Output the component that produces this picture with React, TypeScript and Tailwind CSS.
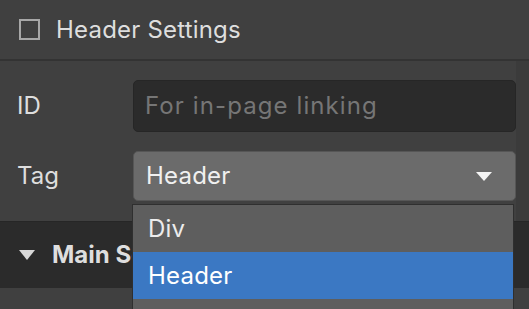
import React from "react";

const font = { fontFamily: "Inter, 'Noto Sans', sans-serif" };

export default function App() {
  return (
    <div className="relative h-[309px] w-[529px] overflow-hidden bg-[#404040] text-[#e0e0e0]" style={font}>
      <HeaderRow />
      <div className="h-[2px] bg-[#333333]" />
      <Fields />
      <MainSection />
      <TagMenu />
    </div>
  );
}

function HeaderRow() {
  return (
    <div className="flex h-[59px] items-center gap-[16px] pl-[19px]">
      <span className="h-[21px] w-[21px] border-2 border-[#a8a8a8]" />
      <span className="text-[24px] tracking-[0.2px] text-[#dedede]">Header Settings</span>
    </div>
  );
}

function Fields() {
  return (
    <div className="flex">
      <div className="flex flex-1 flex-col gap-[19px] pb-[20px] pt-[19px]">
        <div className="flex items-center">
          <span className="w-[133px] pl-[17px] text-[24px] text-[#dedede]">ID</span>
          <div className="flex h-[52px] flex-1 items-center rounded-[5px] border border-[#262626] bg-[#2b2b2b] pl-[11px] text-[24px] tracking-[1.1px] text-[#767676]">
            For in-page linking
          </div>
        </div>
        <div className="flex items-center">
          <span className="w-[133px] pl-[17px] text-[24px] text-[#dedede]">Tag</span>
          <div className="flex h-[50px] flex-1 items-center justify-between rounded-[5px] border border-[#565656] bg-[#6b6b6b] pl-[12px] pr-[23px] text-[24px] tracking-[0.2px] text-[#f0f0f0]">
            Header
            <svg viewBox="0 0 16 9" className="h-[9px] w-[16px]">
              <path d="M0 0h16L8 9Z" fill="#f5f5f5" />
            </svg>
          </div>
        </div>
      </div>
      <div className="w-[13px] bg-[#3b3b3b]" />
    </div>
  );
}

function MainSection() {
  return (
    <>
      <div className="flex h-[67px] items-center gap-[17px] border-t border-[#262626] bg-[#2b2b2b] pl-[19px]">
        <svg viewBox="0 0 16 10" className="h-[10px] w-[16px]">
          <path d="M0 0h16L8 10Z" fill="#d8d8d8" />
        </svg>
        <span className="text-[24px] font-bold text-[#dedede]">Main Settings</span>
      </div>
      <div className="h-[20px] bg-[#404040]" />
    </>
  );
}

function TagMenu() {
  return (
    <div className="absolute left-[132px] top-[204px] w-[382px] border border-[#2f2f2f] bg-[#5e5e5e] text-[24px] tracking-[0.2px] text-[#ececec]">
      <div className="flex h-[47px] items-center pl-[15px]">Div</div>
      <div className="flex h-[47px] items-center bg-[#3b78c3] pl-[15px] text-white">Header</div>
      <div className="h-[47px]" />
    </div>
  );
}
